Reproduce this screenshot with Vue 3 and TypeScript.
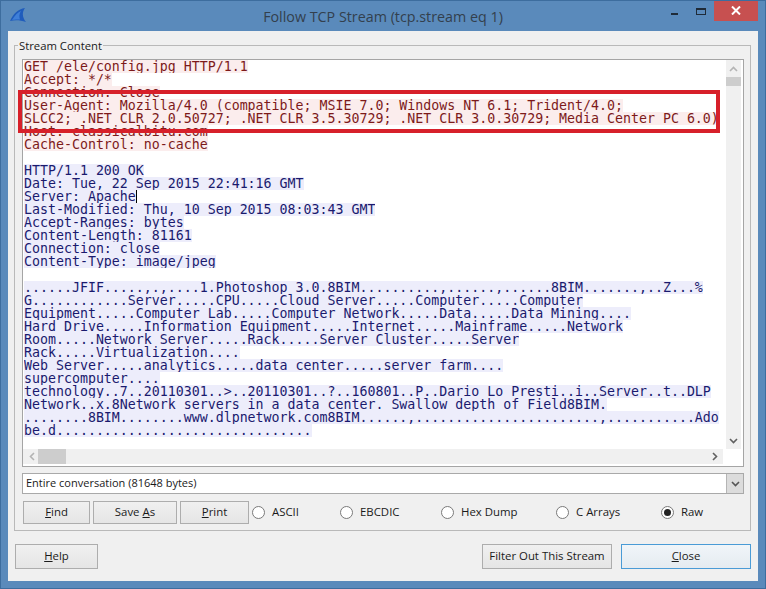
<script setup lang="ts">
const sent: string[] = [
  'GET /ele/config.jpg HTTP/1.1',
  'Accept: */*',
  'Connection: Close',
  'User-Agent: Mozilla/4.0 (compatible; MSIE 7.0; Windows NT 6.1; Trident/4.0;',
  'SLCC2; .NET CLR 2.0.50727; .NET CLR 3.5.30729; .NET CLR 3.0.30729; Media Center PC 6.0)',
  'Host: classicalbitu.com',
  'Cache-Control: no-cache',
]
const headersA: string[] = ['HTTP/1.1 200 OK', 'Date: Tue, 22 Sep 2015 22:41:16 GMT']
const headersB: string[] = [
  'Last-Modified: Thu, 10 Sep 2015 08:03:43 GMT',
  'Accept-Ranges: bytes',
  'Content-Length: 81161',
  'Connection: close',
  'Content-Type: image/jpeg',
]
const body: string[] = [
  '......JFIF.....,.,....1.Photoshop 3.0.8BIM..........,......,......8BIM.......,..Z...%',
  'G............Server.....CPU.....Cloud Server.....Computer.....Computer',
  'Equipment.....Computer Lab.....Computer Network.....Data.....Data Mining....',
  'Hard Drive.....Information Equipment.....Internet.....Mainframe.....Network',
  'Room.....Network Server.....Rack.....Server Cluster.....Server',
  'Rack.....Virtualization....',
  'Web Server.....analytics.....data center.....server farm....',
  'supercomputer....',
  'technology..7..20110301..>..20110301..?..160801..P..Dario Lo Presti..i..Server..t..DLP',
  'Network..x.8Network servers in a data center. Swallow depth of Field8BIM.',
  '........8BIM........www.dlpnetwork.com8BIM......,.......................,...........Ado',
  'be.d................................',
]
const radios = [
  { label: 'ASCII', w: 88, on: false },
  { label: 'EBCDIC', w: 101, on: false },
  { label: 'Hex Dump', w: 115, on: false },
  { label: 'C Arrays', w: 105, on: false },
  { label: 'Raw', w: 60, on: true },
]
</script>

<template>
  <div class="window">
    <header class="titlebar">
      <svg class="logo" width="18" height="18" viewBox="0 0 18 18">
        <path d="M2 15 C5 8 10 3 17 2 C14 6 14 11 18 16 C12 14 7 14 2 15 Z" fill="#1f5cbc" />
        <path d="M4 14 C7 9 10 6 13 5 C11 8 11 11 12 13.5 C9 13.2 6 13.5 4 14 Z" fill="#3f7fd8" />
      </svg>
      <div class="title">Follow TCP Stream (tcp.stream eq 1)</div>
      <div class="winbtns">
        <span class="minimize"></span>
        <span class="maximize"></span>
        <span class="close-x">
          <svg width="10" height="9" viewBox="0 0 10 9"><path d="M1 0.5 L9 8.5 M9 0.5 L1 8.5" stroke="#fff" stroke-width="2" fill="none" /></svg>
        </span>
      </div>
    </header>

    <main class="client">
      <section class="group">
        <span class="legend">Stream Content</span>
        <div class="textbox">
          <div class="content-row">
            <div class="stream">
              <div v-for="l in sent" :key="l" class="line"><span class="req">{{ l }}</span></div>
              <div class="line"></div>
              <div v-for="l in headersA" :key="l" class="line"><span class="res">{{ l }}</span></div>
              <div class="line"><span class="res">Server: Apache</span><i class="caret"></i></div>
              <div v-for="l in headersB" :key="l" class="line"><span class="res">{{ l }}</span></div>
              <div class="line"></div>
              <div v-for="l in body" :key="l" class="line"><span class="res">{{ l }}</span></div>
            </div>
            <div class="vscroll">
              <svg width="9" height="6" viewBox="0 0 9 6" class="arrow-up"><path d="M1 5 L4.5 1.5 L8 5" fill="none" stroke="#b4b4b4" stroke-width="1.6" /></svg>
              <span class="vthumb"></span>
              <svg width="9" height="6" viewBox="0 0 9 6" class="arrow-down"><path d="M1 1 L4.5 4.5 L8 1" fill="none" stroke="#606060" stroke-width="1.6" /></svg>
            </div>
          </div>
          <div class="hscroll">
            <div class="htrack">
              <svg width="6" height="9" viewBox="0 0 6 9" class="arrow-left"><path d="M5 1 L1.5 4.5 L5 8" fill="none" stroke="#b4b4b4" stroke-width="1.6" /></svg>
              <span class="hthumb"></span>
              <svg width="6" height="9" viewBox="0 0 6 9" class="arrow-right"><path d="M1 1 L4.5 4.5 L1 8" fill="none" stroke="#606060" stroke-width="1.6" /></svg>
            </div>
            <div class="corner"></div>
          </div>
        </div>

        <div class="combo">
          <span class="combo-text">Entire conversation (81648 bytes)</span>
          <span class="combo-btn">
            <svg width="9" height="6" viewBox="0 0 9 6"><path d="M1 1 L4.5 4.5 L8 1" fill="none" stroke="#555" stroke-width="1.6" /></svg>
          </span>
        </div>

        <div class="controls">
          <button class="btn find"><u>F</u>ind</button>
          <button class="btn saveas">Save <u>A</u>s</button>
          <button class="btn print"><u>P</u>rint</button>
          <div class="radios">
            <label v-for="r in radios" :key="r.label" class="radio" :style="{ width: r.w + 'px' }">
              <span class="dot" :class="{ on: r.on }"></span>
              <span class="radio-label">{{ r.label }}</span>
            </label>
          </div>
        </div>
      </section>

      <footer class="actions">
        <button class="btn big help"><u>H</u>elp</button>
        <span class="spacer"></span>
        <button class="btn big filter">Filter Out This Stream</button>
        <button class="btn big closebtn"><u>C</u>lose</button>
      </footer>
    </main>

    <div class="highlight"></div>
  </div>
</template>

<style>
html, body { margin: 0; padding: 0; overflow: hidden; }
</style>

<style scoped>
.window {
  position: relative;
  width: 766px;
  height: 589px;
  box-sizing: border-box;
  background: #5a8abb;
  border: 1px solid #3d6d9e;
  padding: 0 7px 7px;
  display: flex;
  flex-direction: column;
  font-family: "Open Sans", "Noto Sans", sans-serif;
  font-size: 11.3px;
  color: #1a1a1a;
  overflow: hidden;
}
.titlebar { height: 30px; flex: none; display: flex; align-items: center; position: relative; }
.logo { margin-top: -2px; }
.title {
  position: absolute;
  left: 0; right: 0; top: 7px;
  text-align: center;
  font-size: 14.3px;
  line-height: 18px;
  color: #33404d;
}
.winbtns { position: absolute; right: 0; top: -1px; display: flex; align-items: flex-start; }
.minimize { width: 7px; height: 2px; background: #1f2b38; margin: 13px 18px 0 0; }
.maximize { box-sizing: border-box; width: 10px; height: 7px; border: 1px solid #1f2b38; border-top-width: 2px; margin: 8px 8px 0 0; }
.close-x {
  width: 44px; height: 21px; background: #c75050;
  display: flex; align-items: center; justify-content: center;
}
.client {
  flex: 1;
  background: #f0f0f0;
  padding: 14px 7px 13px 6px;
  display: flex;
  flex-direction: column;
  min-height: 0;
}
.group {
  position: relative;
  height: 486px;
  flex: none;
  box-sizing: border-box;
  border: 1px solid #b9b9b9;
  padding: 13px 6px 0 7px;
}
.legend {
  position: absolute; left: 3px; top: -7px;
  background: #f0f0f0; padding: 0 1px;
  line-height: 14px;
}
.textbox {
  height: 408px;
  box-sizing: border-box;
  border: 1px solid #a5a5a5;
  background: #fff;
  display: flex;
  flex-direction: column;
}
.content-row { flex: 1; display: flex; min-height: 0; }
.stream {
  flex: 1;
  min-width: 0;
  overflow: hidden;
  padding: 0 0 0 1px;
  font-family: "DejaVu Sans Mono", "Liberation Mono", monospace;
  font-size: 13.28px;
  line-height: 13px;
  white-space: pre;
}
.line { height: 13px; }
.req, .res { display: inline-block; height: 13px; line-height: 13px; vertical-align: top; overflow: hidden; }
.req { background: #fbeded; color: #7d1a1a; }
.res { background: #ededfb; color: #1a1a6e; }
.caret { display: inline-block; width: 1px; height: 13px; background: #000; vertical-align: top; }
.vscroll {
  width: 15px; flex: none; background: #f0f0f0; margin-right: 2px;
  display: flex; flex-direction: column; align-items: center;
}
.arrow-up { margin-top: 6px; }
.vthumb { width: 15px; height: 9px; background: #cdcdcd; margin-top: 5px; }
.arrow-down { margin-top: auto; margin-bottom: 5px; }
.hscroll { height: 15px; flex: none; display: flex; margin-bottom: 2px; }
.htrack { flex: 1; background: #f0f0f0; display: flex; align-items: center; padding: 0 5px 0 6px; }
.hthumb { width: 28px; height: 15px; background: #cdcdcd; margin-left: 3px; }
.arrow-right { margin-left: auto; }
.corner { width: 20px; background: #fff; flex: none; }
.combo {
  margin-top: 6px;
  height: 21px;
  box-sizing: border-box;
  border: 1px solid #a9a9a9;
  background: #fff;
  display: flex;
  align-items: center;
}
.combo-text { flex: 1; padding-left: 3px; margin-top: -2px; font-size: 11px; }
.combo-btn {
  width: 16px; height: 19px; background: #dcdcdc; border-left: 1px solid #b5b5b5;
  display: flex; align-items: center; justify-content: center;
}
.controls { display: flex; align-items: flex-start; margin-top: 7px; padding-left: 1px; }
.btn {
  box-sizing: border-box;
  height: 23px;
  border: 1px solid #adadad;
  background: linear-gradient(#f0f0f0, #e5e5e5);
  font-family: inherit;
  font-size: 11.4px;
  color: #1a1a1a;
  padding: 0 0 2px;
}
.find { width: 67px; margin-right: 3px; }
.saveas { width: 84px; margin-right: 3px; }
.print { width: 69px; }
.radios { display: flex; margin-left: 3px; height: 23px; }
.radio { display: flex; align-items: center; font-size: 11.4px; }
.radio-label { margin-top: -2px; }
.dot {
  box-sizing: border-box;
  position: relative;
  width: 13px; height: 13px; border-radius: 50%;
  border: 1px solid #7a7a7a; background: #fff; margin-right: 7px; flex: none;
}
.dot.on::after {
  content: ""; position: absolute; left: 2px; top: 2px;
  width: 7px; height: 7px; border-radius: 50%; background: #222;
}
.actions { display: flex; align-items: flex-start; margin-top: 13px; padding-left: 1px; }
.big { height: 25px; }
.help { width: 83px; }
.spacer { flex: 1; }
.filter { width: 130px; margin-right: 9px; }
.closebtn { width: 130px; border-color: #4a9bd6; background: linear-gradient(#f0f5f9, #e5ebf0); }
.highlight {
  position: absolute;
  left: 17px; top: 89px;
  width: 702px; height: 43px;
  box-sizing: border-box;
  border: 4px solid #d7202a;
  pointer-events: none;
}
</style>
